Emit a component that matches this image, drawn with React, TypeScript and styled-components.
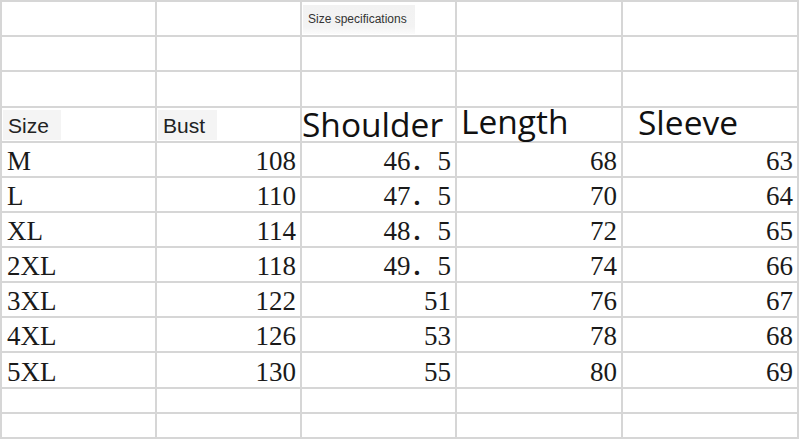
import styled, { createGlobalStyle } from "styled-components";

const Global = createGlobalStyle`
  html, body {
    margin: 0;
    padding: 0;
    background: #ffffff;
  }
`;

const Sheet = styled.div`
  display: grid;
  grid-template-columns: 153px 143px 153px 164px 174px;
  grid-template-rows: 33px 33px 34px 33px 33px 33px 33px 33px 33px 33px 34px 23px 23px;
  gap: 2px;
  padding: 2px;
  width: 799px;
  height: 439px;
  box-sizing: border-box;
  background: #d6d6d6;
`;

const Cell = styled.div<{ $right?: boolean }>`
  background: #ffffff;
  display: flex;
  align-items: flex-end;
  justify-content: ${(p) => (p.$right ? "flex-end" : "flex-start")};
  padding: ${(p) => (p.$right ? "0 4px 1px 0" : "0 0 1px 5px")};
  overflow: visible;
  min-width: 0;
`;

const HeadCell = styled.div<{ $pad?: number }>`
  background: #ffffff;
  display: flex;
  align-items: flex-start;
  padding-left: ${(p) => p.$pad ?? 0}px;
  overflow: visible;
  white-space: nowrap;
`;

const Note = styled.span`
  margin: 3px 0 0 1px;
  padding: 7px 8px 0 5px;
  height: 29px;
  box-sizing: border-box;
  background: linear-gradient(#f2f2f2, #f3f3f3 75%, #fbfbfb);
  font-family: "Liberation Sans", Arial, sans-serif;
  font-size: 12px;
  line-height: 14px;
  color: #333333;
`;

const Label = styled.span`
  margin: 2px 0 0 1px;
  padding: 5px 12px 4px 5px;
  background: #f4f4f4;
  font-family: "Liberation Sans", Arial, sans-serif;
  font-size: 21px;
  line-height: 21px;
  color: #222222;
`;

const BigLabel = styled.span<{ $shift?: number }>`
  margin-top: ${(p) => p.$shift ?? 0}px;
  font-family: "Open Sans", "Noto Sans", sans-serif;
  font-size: 33.5px;
  line-height: 33px;
  color: #111111;
`;

const Num = styled.span`
  font-family: "Liberation Serif", "Noto Sans CJK SC", serif;
  font-size: 27px;
  line-height: 27px;
  color: #1a1a1a;
  white-space: nowrap;
`;

const sizes = [
  ["M", "108", "46．5", "68", "63"],
  ["L", "110", "47．5", "70", "64"],
  ["XL", "114", "48．5", "72", "65"],
  ["2XL", "118", "49．5", "74", "66"],
  ["3XL", "122", "51", "76", "67"],
  ["4XL", "126", "53", "78", "68"],
  ["5XL", "130", "55", "80", "69"],
];

export default function App() {
  return (
    <>
      <Global />
      <Sheet>
        <HeadCell />
        <HeadCell />
        <HeadCell>
          <Note>Size specifications</Note>
        </HeadCell>
        <HeadCell />
        <HeadCell />
        {Array.from({ length: 10 }).map((_, i) => (
          <HeadCell key={"e" + i} />
        ))}

        <HeadCell>
          <Label>Size</Label>
        </HeadCell>
        <HeadCell>
          <Label>Bust</Label>
        </HeadCell>
        <HeadCell $pad={0}>
          <BigLabel>Shoulder</BigLabel>
        </HeadCell>
        <HeadCell $pad={4}>
          <BigLabel $shift={-3}>Length</BigLabel>
        </HeadCell>
        <HeadCell $pad={15}>
          <BigLabel $shift={-2}>Sleeve</BigLabel>
        </HeadCell>

        {sizes.map((row) =>
          row.map((v, i) => (
            <Cell key={row[0] + i} $right={i > 0}>
              <Num>{v}</Num>
            </Cell>
          ))
        )}

        {Array.from({ length: 10 }).map((_, i) => (
          <HeadCell key={"f" + i} />
        ))}
      </Sheet>
    </>
  );
}
